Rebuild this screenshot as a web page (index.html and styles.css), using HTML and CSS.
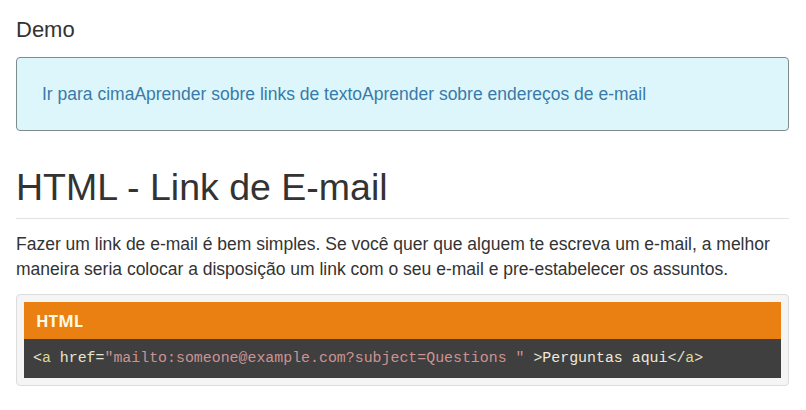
FILE: index.html
```html
<!DOCTYPE html>
<html lang="pt">
<head>
<meta charset="utf-8">
<title>HTML - Link de E-mail</title>
<link rel="stylesheet" href="styles.css">
</head>
<body>
<main class="page">
  <h3 class="demo-title">Demo</h3>
  <div class="alert">
    <a href="#" class="alert-link">Ir para cima</a><a href="#" class="alert-link">Aprender sobre links de texto</a><a href="#" class="alert-link">Aprender sobre endereços de e-mail</a>
  </div>
  <h1 class="title">HTML - Link de E-mail</h1>
  <p class="lead-text">Fazer um link de e-mail é bem simples. Se você quer que alguem te escreva um e-mail, a melhor maneira seria colocar a disposição um link com o seu e-mail e pre-estabelecer os assuntos.</p>
  <div class="code-box">
    <div class="code-head">HTML</div>
    <pre class="code"><span class="c-punc">&lt;</span><span class="c-tag">a</span> <span class="c-attr">href=</span><span class="c-str">"mailto:someone@example.com?subject=Questions "</span> <span class="c-punc">&gt;</span><span class="c-text">Perguntas aqui</span><span class="c-punc">&lt;/</span><span class="c-tag">a</span><span class="c-punc">&gt;</span></pre>
  </div>
</main>
</body>
</html>
```

FILE: styles.css
```css
html, body {
  margin: 0;
  padding: 0;
  background: #ffffff;
}

body {
  font-family: "Liberation Sans", Arial, sans-serif;
  color: #333333;
}

.page {
  padding: 17px 17px 0 16px;
}

.demo-title {
  margin: 0 0 14px 0;
  font-size: 22px;
  line-height: 26px;
  font-weight: normal;
  color: #333333;
}

.alert {
  border: 1px solid #7f8c8d;
  border-radius: 4px;
  background: #dcf6fc;
  padding: 25px 25px;
  font-size: 17.5px;
  line-height: 22px;
}

.alert-link {
  color: #3a7aa8;
  text-decoration: none;
}

.title {
  margin: 34px 0 0 0;
  font-size: 37.5px;
  line-height: 44px;
  font-weight: normal;
  color: #333333;
  padding-bottom: 9px;
  border-bottom: 1px solid #e2e2e2;
}

.lead-text {
  margin: 13px 0 0 0;
  font-size: 17.5px;
  line-height: 25px;
  color: #333333;
}

.code-box {
  margin-top: 12px;
  border: 1px solid #dddddd;
  border-radius: 4px;
  background: #f5f5f5;
  padding: 7px;
}

.code-head {
  background: #ea8011;
  color: #fff8e0;
  font-family: "Open Sans", "DejaVu Sans", sans-serif;
  font-weight: bold;
  font-size: 16.5px;
  line-height: 37px;
  padding: 0 12px;
}

.code {
  margin: 0;
  background: #3f3f3f;
  padding: 0 9px;
  font-family: "Liberation Mono", "DejaVu Sans Mono", monospace;
  font-size: 14.9px;
  line-height: 39px;
  color: #dcdccc;
  white-space: pre;
}

.c-punc { color: #e8e4d0; }
.c-tag { color: #dcd98a; }
.c-attr { color: #e8e4d0; }
.c-str { color: #cc9393; }
.c-text { color: #efe9d9; }
```
